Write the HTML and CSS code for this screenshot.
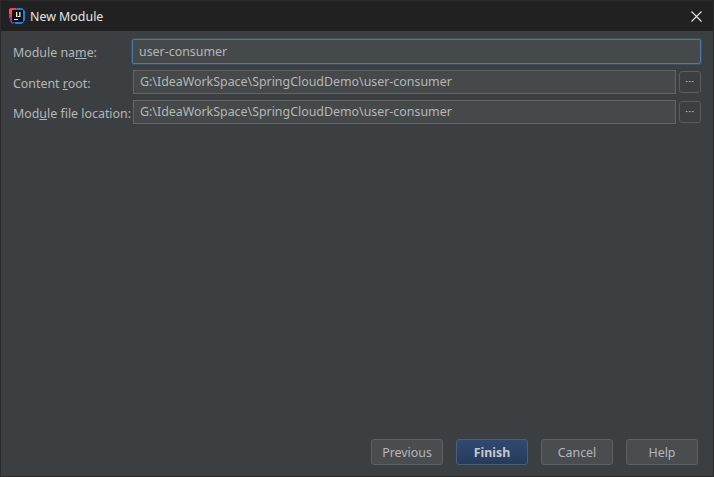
FILE: index.html
```html
<!DOCTYPE html>
<html lang="en">
<head>
    <meta charset="UTF-8">
    <meta name="viewport" content="width=device-width, initial-scale=1.0">
    <title>New Module</title>
    <link rel="stylesheet" href="styles.css">
</head>
<body>
    <div class="dialog">
        <header class="titlebar">
            <svg class="app-icon" width="16" height="16" viewBox="0 0 16 16">
                <path d="M1 0h6l3 5-6 6-4-1z" fill="#ee3a63"/>
                <path d="M1 9l3 0 2 5-3 2-2-3z" fill="#8a3f9e"/>
                <path d="M8 0h5l3 3v9l-3 4H6l-1-5z" fill="#1f7fe8"/>
                <path d="M0 1h5v5H0z" fill="#f2524a"/>
                <rect x="3" y="2" width="11" height="12" fill="#111"/>
                <rect x="7" y="4" width="1.3" height="5" fill="#eee"/>
                <rect x="10.2" y="4" width="1.3" height="5" fill="#eee"/>
                <rect x="8.5" y="8" width="2" height="1" fill="#eee"/>
                <rect x="5" y="11" width="4" height="1" fill="#eee"/>
            </svg>
            <span class="title">New Module</span>
            <svg class="close" width="11" height="11" viewBox="0 0 11 11">
                <path d="M.5.5l10 10M10.5.5l-10 10" stroke="#e8e8e8" stroke-width="1.1" fill="none"/>
            </svg>
        </header>
        <main class="content">
            <form class="form">
                <label class="label">Module na<u>m</u>e:</label>
                <input class="field field-focus" type="text" value="user-consumer">

                <label class="label">Content <u>r</u>oot:</label>
                <div class="path-row">
                    <input class="field" type="text" value="G:\IdeaWorkSpace\SpringCloudDemo\user-consumer">
                    <button class="browse" type="button">···</button>
                </div>

                <label class="label">Mod<u>u</u>le file location:</label>
                <div class="path-row">
                    <input class="field" type="text" value="G:\IdeaWorkSpace\SpringCloudDemo\user-consumer">
                    <button class="browse" type="button">···</button>
                </div>
            </form>
            <footer class="actions">
                <button class="btn" type="button">Previous</button>
                <button class="btn btn-primary" type="button">Finish</button>
                <button class="btn" type="button">Cancel</button>
                <button class="btn" type="button">Help</button>
            </footer>
        </main>
    </div>
</body>
</html>
```

FILE: styles.css
```css
html, body {
    height: 100%;
    margin: 0;
}
body {
    background-color: #3c3f41;
    color: #b4b7b9;
    font-family: 'Noto Sans', 'Open Sans', sans-serif;
    font-size: 12.4px;
    overflow: hidden;
}
.dialog {
    height: 100%;
    box-sizing: border-box;
    border: 1px solid #2b2b2b;
    display: flex;
    flex-direction: column;
}
.titlebar {
    height: 30px;
    flex: none;
    background-color: #212121;
    display: flex;
    align-items: center;
    padding: 0 11px 0 8px;
    color: #e4e4e4;
}
.app-icon {
    margin-right: 5px;
}
.title {
    flex: 1;
}
.content {
    flex: 1;
    display: flex;
    flex-direction: column;
    justify-content: space-between;
    padding: 8px 12px 11px 12px;
}
.form {
    display: grid;
    grid-template-columns: 120px 1fr;
    grid-template-rows: 25px 24px 24px;
    row-gap: 6px;
    align-items: center;
}
.form .field-focus {
    height: 25px;
    margin-left: -1px;
    width: calc(100% + 1px);
    padding-bottom: 0;
}
.label {
    white-space: nowrap;
    padding-top: 2px;
}
.path-row {
    display: flex;
    align-items: center;
    gap: 3px;
}
.field {
    flex: 1;
    min-width: 0;
    height: 24px;
    box-sizing: border-box;
    background-color: #45494a;
    border: 1px solid #646464;
    color: #b4b7b9;
    font: inherit;
    padding: 0 6px 2px;
    outline: none;
}
.field-focus {
    border: 1px solid #4a7aab;
    border-radius: 2px;
    box-shadow: 0 0 0 1px rgba(70, 110, 160, 0.35);
}
.browse {
    width: 22px;
    height: 22px;
    box-sizing: border-box;
    background-color: #3c3f41;
    border: 1px solid #5a5d5f;
    border-radius: 3px;
    color: #d8d8d8;
    font: inherit;
    font-size: 9px;
    letter-spacing: 0.6px;
    line-height: 14px;
    padding: 0;
}
.actions {
    display: flex;
    justify-content: flex-end;
    gap: 13px;
    padding-right: 3px;
}
.btn {
    width: 72px;
    height: 26px;
    box-sizing: border-box;
    background-color: #494d4f;
    border: 1px solid #5e6163;
    border-radius: 3px;
    color: #b4b7b9;
    font: inherit;
    padding: 0;
}
.btn-primary {
    background: linear-gradient(#2f4a70, #263b5a);
    border-color: #4a5f7c;
    color: #c4c8cc;
    font-weight: 700;
}
```
